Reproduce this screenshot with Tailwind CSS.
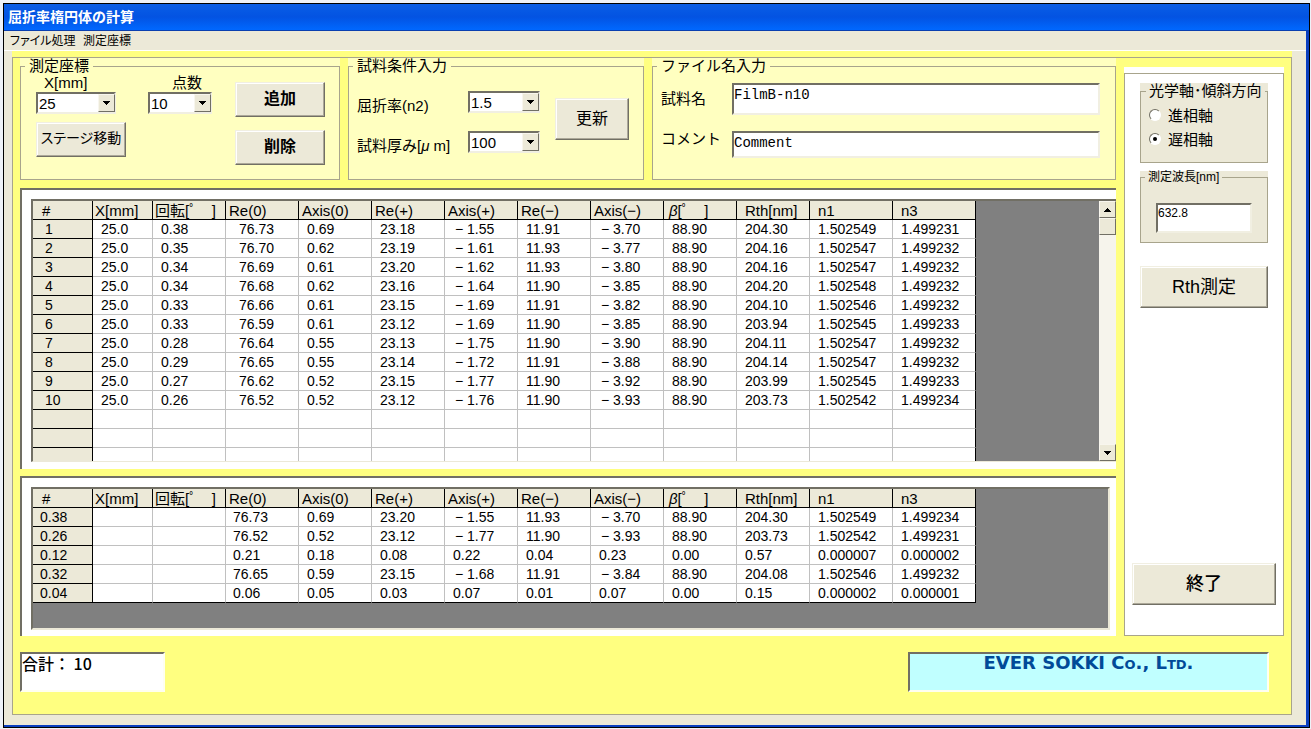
<!DOCTYPE html>
<html lang="ja">
<head>
<meta charset="utf-8">
<title>屈折率楕円体の計算</title>
<script src="https://cdn.jsdelivr.net/npm/@tailwindcss/browser@4"></script>
</head>
<body class="flex min-h-screen flex-col bg-[#eef2f8] pt-[3px] pr-px pb-px pl-[3px] font-['Liberation_Sans','Noto_Sans_CJK_JP',sans-serif] text-[15px] text-black">
<div class="flex flex-1 flex-col border border-black bg-[#0a3fc0] pb-[2px]">
  <header class="flex h-[27px] items-center bg-linear-to-b from-[#0a5ee6] via-[#0353e2] to-[#0068ff] border-b border-[#0a3fb0] pl-1">
    <h1 class="text-[14px] leading-none font-bold text-white">屈折率楕円体の計算</h1>
  </header>
  <div class="mr-[3px] flex flex-1 flex-col bg-[#ece9d8]">
    <nav class="flex h-5 items-center border-b border-white pl-[6px] text-[12px] leading-none [font-feature-settings:'palt']">
      <button type="button" class="w-[73px] text-left">ファイル処理</button>
      <button type="button">測定座標</button>
    </nav>
    <main class="flex flex-1 flex-col pr-[14px] pb-[10px] pl-2">
      <div class="flex flex-1 flex-col bg-[#ffff80] pt-[6px]">
        <div class="flex flex-1 flex-col border border-[#a8a48c]">
          <div class="grid grid-cols-[minmax(0,1fr)_160px] gap-2 px-[7px]">
            <div class="flex flex-col">
              <div class="grid grid-cols-[320fr_296fr_464fr] gap-2">
                <div class="bg-[#ffffc0]">
                  <fieldset class="h-full border border-[#a8a48c] pr-[14px] pb-[14px] pl-[15px]">
                    <legend class="-ml-[11px] px-1 leading-4">測定座標</legend>
                    <div class="flex">
                      <div class="w-[90px]">
                        <label for="x" class="block pl-2 leading-[18px]">X[mm]</label>
                        <div class="relative w-20">
                          <select id="x" class="block h-[22px] w-full appearance-none border-2 border-[#716f64] border-r-[#f1efe2] border-b-[#f1efe2] bg-white pl-px leading-none"><option>25</option></select>
                          <span class="pointer-events-none absolute top-[2px] right-[1px] flex h-[18px] w-[17px] items-center justify-center border border-[#f8f6ee] border-r-[#716f64] border-b-[#716f64] bg-[#ece9d8]"><svg width="7" height="4" shape-rendering="crispEdges"><path d="M0 0h7v1h-1v1h-1v1h-1v1h-1v-1h-1v-1h-1v-1h-1z"/></svg></span>
                        </div>
                        <button type="button" class="mt-2 block h-[35px] w-full border border-[#f1efe2] border-r-[#716f64] border-b-[#716f64] bg-[#ece9d8] pb-1 text-[14px] leading-none whitespace-nowrap [font-feature-settings:'palt'] shadow-[inset_-1px_-1px_#aca899,inset_1px_1px_#fff]">ステージ移動</button>
                      </div>
                      <div class="ml-[22px] w-16">
                        <label for="n" class="block pl-6 leading-[18px]">点数</label>
                        <div class="relative">
                          <select id="n" class="block h-[22px] w-full appearance-none border-2 border-[#716f64] border-r-[#f1efe2] border-b-[#f1efe2] bg-white pl-px leading-none"><option>10</option></select>
                          <span class="pointer-events-none absolute top-[2px] right-[1px] flex h-[18px] w-[17px] items-center justify-center border border-[#f8f6ee] border-r-[#716f64] border-b-[#716f64] bg-[#ece9d8]"><svg width="7" height="4" shape-rendering="crispEdges"><path d="M0 0h7v1h-1v1h-1v1h-1v1h-1v-1h-1v-1h-1v-1h-1z"/></svg></span>
                        </div>
                      </div>
                      <div class="ml-auto flex w-[90px] flex-col gap-[13px] pt-2">
                        <button type="button" class="h-[35px] border border-[#f1efe2] border-r-[#716f64] border-b-[#716f64] bg-[#ece9d8] pb-px text-[16px] leading-none font-bold shadow-[inset_-1px_-1px_#aca899,inset_1px_1px_#fff]">追加</button>
                        <button type="button" class="h-[35px] border border-[#f1efe2] border-r-[#716f64] border-b-[#716f64] bg-[#ece9d8] pb-px text-[16px] leading-none font-bold shadow-[inset_-1px_-1px_#aca899,inset_1px_1px_#fff]">削除</button>
                      </div>
                    </div>
                  </fieldset>
                </div>
                <div class="bg-[#ffffc0]">
                  <fieldset class="h-full border border-[#a8a48c] pr-[14px] pl-2">
                    <legend class="-ml-1 px-1 leading-4">試料条件入力</legend>
                    <div class="flex items-start pt-[17px]">
                      <div class="grid flex-1 grid-cols-[111px_72px] gap-y-[10px]">
                        <label for="n2" class="leading-[30px] whitespace-nowrap">屈折率(n2)</label>
                        <div class="relative">
                          <select id="n2" class="block h-[22px] w-full appearance-none border-2 border-[#716f64] border-r-[#f1efe2] border-b-[#f1efe2] bg-white pl-px leading-none"><option>1.5</option></select>
                          <span class="pointer-events-none absolute top-[2px] right-[1px] flex h-[18px] w-[17px] items-center justify-center border border-[#f8f6ee] border-r-[#716f64] border-b-[#716f64] bg-[#ece9d8]"><svg width="7" height="4" shape-rendering="crispEdges"><path d="M0 0h7v1h-1v1h-1v1h-1v1h-1v-1h-1v-1h-1v-1h-1z"/></svg></span>
                        </div>
                        <label for="th" class="leading-[30px] whitespace-nowrap">試料厚み[<i>μ</i> m]</label>
                        <div class="relative">
                          <select id="th" class="block h-[22px] w-full appearance-none border-2 border-[#716f64] border-r-[#f1efe2] border-b-[#f1efe2] bg-white pl-px leading-none"><option>100</option></select>
                          <span class="pointer-events-none absolute top-[2px] right-[1px] flex h-[18px] w-[17px] items-center justify-center border border-[#f8f6ee] border-r-[#716f64] border-b-[#716f64] bg-[#ece9d8]"><svg width="7" height="4" shape-rendering="crispEdges"><path d="M0 0h7v1h-1v1h-1v1h-1v1h-1v-1h-1v-1h-1v-1h-1z"/></svg></span>
                        </div>
                      </div>
                      <button type="button" class="mt-[7px] h-[42px] w-[74px] border border-[#f1efe2] border-r-[#716f64] border-b-[#716f64] bg-[#ece9d8] pb-px text-[16px] leading-none shadow-[inset_-1px_-1px_#aca899,inset_1px_1px_#fff]">更新</button>
                    </div>
                  </fieldset>
                </div>
                <div class="bg-[#ffffc0]">
                  <fieldset class="h-full border border-[#a8a48c] pr-[15px] pl-2">
                    <legend class="-ml-1 px-1 leading-4">ファイル名入力</legend>
                    <div class="grid grid-cols-[71px_1fr] gap-y-4 pt-[9px]">
                      <label for="name" class="leading-8">試料名</label>
                      <input id="name" value="FilmB-n10" class="h-8 min-w-0 border-2 border-[#716f64] border-r-[#f1efe2] border-b-[#f1efe2] bg-white pb-2 font-['Liberation_Mono',monospace] text-[14px]">
                      <label for="com" class="leading-4">コメント</label>
                      <input id="com" value="Comment" class="h-[27px] min-w-0 border-2 border-[#716f64] border-r-[#f1efe2] border-b-[#f1efe2] bg-white pb-1 font-['Liberation_Mono',monospace] text-[14px]">
                    </div>
                  </fieldset>
                </div>
              </div>

              <section class="mt-2 border-t-2 border-l-2 border-[#716f64] bg-white pt-[9px] pb-[7px] pl-[9px]">
                <div class="flex h-[263px] overflow-hidden border-t-2 border-b border-l-2 border-[#716f64] border-b-[#ece9d8] bg-[#808080]">
                  <table id="data" class="w-[943px] table-fixed border-separate border-spacing-0 self-start text-left text-[14px] leading-none"></table>
                  <div class="ml-auto flex w-[17px] flex-col bg-[#f6f4ec]">
                    <button type="button" aria-label="上へ" class="flex h-[17px] items-center justify-center border border-[#f8f6ee] border-r-[#716f64] border-b-[#716f64] bg-[#ece9d8]"><svg width="7" height="4" shape-rendering="crispEdges"><path d="M3 0h1v1h1v1h1v1h1v1h-7v-1h1v-1h1v-1h1z"/></svg></button>
                    <span class="h-[17px] border border-[#f8f6ee] border-r-[#716f64] border-b-[#716f64] bg-[#ece9d8]"></span>
                    <button type="button" aria-label="下へ" class="mt-auto flex h-[17px] items-center justify-center border border-[#f8f6ee] border-r-[#716f64] border-b-[#716f64] bg-[#ece9d8]"><svg width="7" height="4" shape-rendering="crispEdges"><path d="M0 0h7v1h-1v1h-1v1h-1v1h-1v-1h-1v-1h-1v-1h-1z"/></svg></button>
                  </div>
                </div>
              </section>

              <section class="mt-[7px] border-t-2 border-l-2 border-[#716f64] bg-white pt-[9px] pr-[6px] pb-[6px] pl-[9px]">
                <div class="border-2 border-[#716f64] border-r-[#ece9d8] border-b-[#ece9d8] bg-[#808080] pb-[25px]">
                  <table id="stats" class="w-[943px] table-fixed border-separate border-spacing-0 text-left text-[14px] leading-none"></table>
                </div>
              </section>
            </div>

            <aside class="mt-[9px] flex bg-white pt-[6px]">
              <div class="flex flex-1 flex-col border border-[#a8a48c] px-[15px] pt-[9px] pb-[30px]">
                <div class="bg-[#ece9d8]">
                  <fieldset class="border border-[#a8a48c] pt-1 pb-[11px] pl-2">
                    <legend class="-ml-[3px] px-[3px] leading-4 whitespace-nowrap">光学軸･傾斜方向</legend>
                    <label class="flex h-6 items-center gap-[7px] leading-none"><input type="radio" name="axis" class="peer sr-only"><span class="flex size-3 items-center justify-center rounded-full border border-[#716f64] border-r-white border-b-white bg-white"></span>進相軸</label>
                    <label class="flex h-6 items-center gap-[7px] leading-none"><input type="radio" name="axis" checked class="peer sr-only"><span class="flex size-3 items-center justify-center rounded-full border border-[#716f64] border-r-white border-b-white bg-white"><span class="size-1 rounded-full bg-black"></span></span>遅相軸</label>
                  </fieldset>
                </div>
                <div class="mt-2 bg-[#ece9d8]">
                  <fieldset class="border border-[#a8a48c] px-[15px] pt-5 pb-[9px]">
                    <legend class="-ml-[11px] px-[3px] text-[12px] leading-3">測定波長[nm]</legend>
                    <input aria-label="測定波長[nm]" value="632.8" class="block h-[30px] w-full border-2 border-[#716f64] border-r-[#f1efe2] border-b-[#f1efe2] bg-white pb-[10px] text-[12px]">
                  </fieldset>
                </div>
                <button type="button" class="mt-[23px] h-[42px] border border-[#f1efe2] border-r-[#716f64] border-b-[#716f64] bg-[#ece9d8] pb-px text-[18px] leading-none shadow-[inset_-1px_-1px_#aca899,inset_1px_1px_#fff]">Rth測定</button>
                <button type="button" class="-mx-2 mt-auto h-[42px] border border-[#f1efe2] border-r-[#716f64] border-b-[#716f64] bg-[#ece9d8] pb-px text-[18px] leading-none font-medium shadow-[inset_-1px_-1px_#aca899,inset_1px_1px_#fff]">終了</button>
              </div>
            </aside>
          </div>

          <footer class="mt-4 flex justify-between pr-[22px] pl-[7px]">
            <div class="h-10 w-[145px] border-2 border-[#716f64] border-r-[#fffff0] border-b-[#fffff0] bg-white font-['Noto_Sans_CJK_JP',sans-serif] text-[16px] leading-[18px] font-medium">合計： 10</div>
            <div class="h-10 w-[361px] border-2 border-[#716f64] border-r-[#fffff0] border-b-[#fffff0] bg-[#c0ffff] text-center font-['DejaVu_Sans',sans-serif] text-[18px] leading-[18px] font-bold text-[#004a98] [font-variant:small-caps]">EVER SOKKI Co., Ltd.</div>
          </footer>
        </div>
      </div>
    </main>
  </div>
</div>
<script>
const heads = ["#","X[mm]","回転[ﾟ　]","Re(0)","Axis(0)","Re(+)","Axis(+)","Re(−)","Axis(−)","<i>β</i>[ﾟ　]","Rth[nm]","n1","n3"];
const headPad = ["pl-[9px]","pl-[2px]","pl-[2px]","pl-[3px]","pl-[3px]","pl-[3px]","pl-[3px]","pl-[3px]","pl-[3px]","pl-[5px]","pl-2","pl-2","pl-2"];
const widths = ["w-[60px]","w-[60px]","w-[73px]","w-[73px]","w-[73px]","w-[73px]","w-[73px]","w-[73px]","w-[73px]","w-[73px]","w-[73px]","w-[83px]","w-[83px]"];
const rows = `1|25.0|0.38|76.73|0.69|23.18|− 1.55|11.91|− 3.70|88.90|204.30|1.502549|1.499231
2|25.0|0.35|76.70|0.62|23.19|− 1.61|11.93|− 3.77|88.90|204.16|1.502547|1.499232
3|25.0|0.34|76.69|0.61|23.20|− 1.62|11.93|− 3.80|88.90|204.16|1.502547|1.499232
4|25.0|0.34|76.68|0.62|23.16|− 1.64|11.90|− 3.85|88.90|204.20|1.502548|1.499232
5|25.0|0.33|76.66|0.61|23.15|− 1.69|11.91|− 3.82|88.90|204.10|1.502546|1.499232
6|25.0|0.33|76.59|0.61|23.12|− 1.69|11.90|− 3.85|88.90|203.94|1.502545|1.499233
7|25.0|0.28|76.64|0.55|23.13|− 1.75|11.90|− 3.90|88.90|204.11|1.502547|1.499232
8|25.0|0.29|76.65|0.55|23.14|− 1.72|11.91|− 3.88|88.90|204.14|1.502547|1.499232
9|25.0|0.27|76.62|0.52|23.15|− 1.77|11.90|− 3.92|88.90|203.99|1.502545|1.499233
10|25.0|0.26|76.52|0.52|23.12|− 1.76|11.90|− 3.93|88.90|203.73|1.502542|1.499234
||||||||||||
||||||||||||
||||||||||||`;
const stats = `0.38|||76.73|0.69|23.20|− 1.55|11.93|− 3.70|88.90|204.30|1.502549|1.499234
0.26|||76.52|0.52|23.12|− 1.77|11.90|− 3.93|88.90|203.73|1.502542|1.499231
0.12|||0.21|0.18|0.08|0.22|0.04|0.23|0.00|0.57|0.000007|0.000002
0.32|||76.65|0.59|23.15|− 1.68|11.91|− 3.84|88.90|204.08|1.502546|1.499232
0.04|||0.06|0.05|0.03|0.07|0.01|0.07|0.00|0.15|0.000002|0.000001`;
function build(id, text, rowPad, rePad) {
  const head = heads.map((h, i) => `<th scope="col" class="h-[19px] overflow-hidden border-r border-b border-black bg-[#ece9d8] p-0 text-[15px] leading-none font-normal whitespace-nowrap ${widths[i]} ${headPad[i]}">${h}</th>`).join("");
  const lines = text.split("\n");
  const body = lines.map((line, r) => "<tr>" + line.split("|").map((v, i) => {
    if (i === 0) return `<th scope="row" class="h-[19px] border-r border-b border-black bg-[#ece9d8] p-0 font-normal ${rowPad}">${v}</th>`;
    const right = i === 12 ? "border-r-black" : "border-r-[#c0c0c0]";
    const bottom = id === "stats" && r === lines.length - 1 ? "border-b-black" : "border-b-[#c0c0c0]";
    const pad = i === 3 ? rePad : v[0] === "−" ? "pl-[10px]" : "pl-2";
    return `<td class="h-[19px] border-r border-b bg-white p-0 whitespace-nowrap ${right} ${bottom} ${pad}">${v}</td>`;
  }).join("") + "</tr>").join("");
  document.getElementById(id).innerHTML = `<thead><tr>${head}</tr></thead><tbody>${body}</tbody>`;
}
build("data", rows, "pl-3", "pl-[13px]");
build("stats", stats, "pl-[7px]", "pl-[7px]");
</script>
</body>
</html>
